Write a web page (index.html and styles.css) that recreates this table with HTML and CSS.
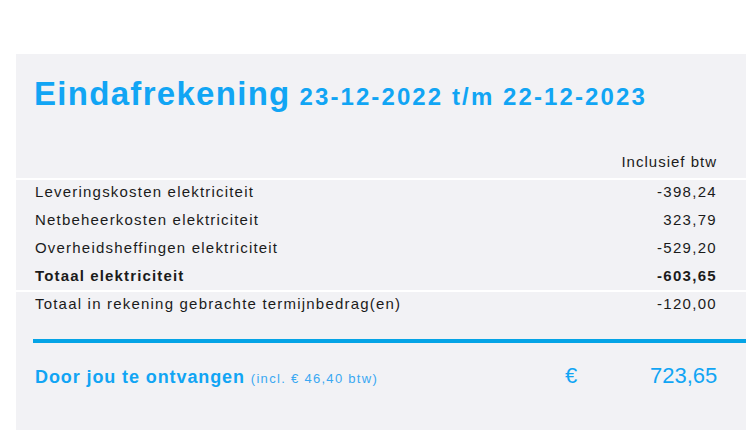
FILE: index.html
```html
<!DOCTYPE html>
<html lang="nl">
<head>
<meta charset="utf-8">
<title>Eindafrekening</title>
<link rel="stylesheet" href="styles.css">
</head>
<body>
<div class="panel">
  <h1 class="title"><span class="title-main">Eindafrekening</span> <span class="title-date">23-12-2022 t/m 22-12-2023</span></h1>
  <div class="head-row"><span class="head-label">Inclusief btw</span></div>
  <div class="rows">
    <div class="row sep"><span class="label">Leveringskosten elektriciteit</span><span class="amount">-398,24</span></div>
    <div class="row"><span class="label">Netbeheerkosten elektriciteit</span><span class="amount">323,79</span></div>
    <div class="row"><span class="label">Overheidsheffingen elektriciteit</span><span class="amount">-529,20</span></div>
    <div class="row bold short"><span class="label">Totaal elektriciteit</span><span class="amount">-603,65</span></div>
    <div class="row sep"><span class="label">Totaal in rekening gebrachte termijnbedrag(en)</span><span class="amount">-120,00</span></div>
  </div>
  <div class="total-line"></div>
  <div class="total-row">
    <span class="total-label">Door jou te ontvangen <span class="total-note">(incl. € 46,40 btw)</span></span>
    <span class="total-euro">€</span>
    <span class="total-amount">723,65</span>
  </div>
</div>
</body>
</html>
```
FILE: styles.css
```css
* { box-sizing: border-box; }
html, body {
  margin: 0;
  padding: 0;
  background: #ffffff;
}
body {
  font-family: "Liberation Sans", Arial, sans-serif;
  color: #1b1b1b;
}
.panel {
  margin: 54px 0 0 16px;
  min-height: calc(100vh - 54px);
  background: #f2f2f5;
  padding-top: 20px;
}
.title {
  margin: 0;
  padding-left: 18px;
  line-height: 40px;
  font-weight: bold;
  color: #11a5f4;
  white-space: nowrap;
}
.title-main {
  font-size: 33px;
  letter-spacing: 1.3px;
}
.title-date {
  font-size: 24px;
  letter-spacing: 2.1px;
}
.head-row {
  display: flex;
  justify-content: flex-end;
  padding: 33px 29px 4px 0;
  line-height: 24px;
  font-size: 15px;
}
.head-label {
  letter-spacing: 1px;
}
.rows {
  display: flex;
  flex-direction: column;
}
.row {
  display: flex;
  justify-content: space-between;
  align-items: baseline;
  padding: 0 29px 4px 19px;
  font-size: 15px;
  line-height: 24px;
  letter-spacing: 1.2px;
}
.row.short {
  padding-bottom: 2px;
}
.row.sep {
  border-top: 2px solid #ffffff;
}
.row.bold {
  font-weight: bold;
  letter-spacing: 1.15px;
}
.amount {
  letter-spacing: 1.3px;
}
.total-line {
  margin: 19px 0 0 17px;
  height: 4px;
  background: #05a4e6;
}
.total-row {
  display: flex;
  align-items: baseline;
  margin-top: 19px;
  padding: 0 30px 0 19px;
  line-height: 28px;
  color: #11a5f4;
}
.total-label {
  flex: 1;
  font-size: 18px;
  font-weight: bold;
  letter-spacing: 0.9px;
}
.total-note {
  font-size: 13px;
  font-weight: normal;
  letter-spacing: 1.3px;
  color: #3aa8f2;
}
.total-euro {
  width: 85px;
  font-size: 22px;
}
.total-amount {
  width: 66px;
  text-align: right;
  font-size: 22px;
}
```
